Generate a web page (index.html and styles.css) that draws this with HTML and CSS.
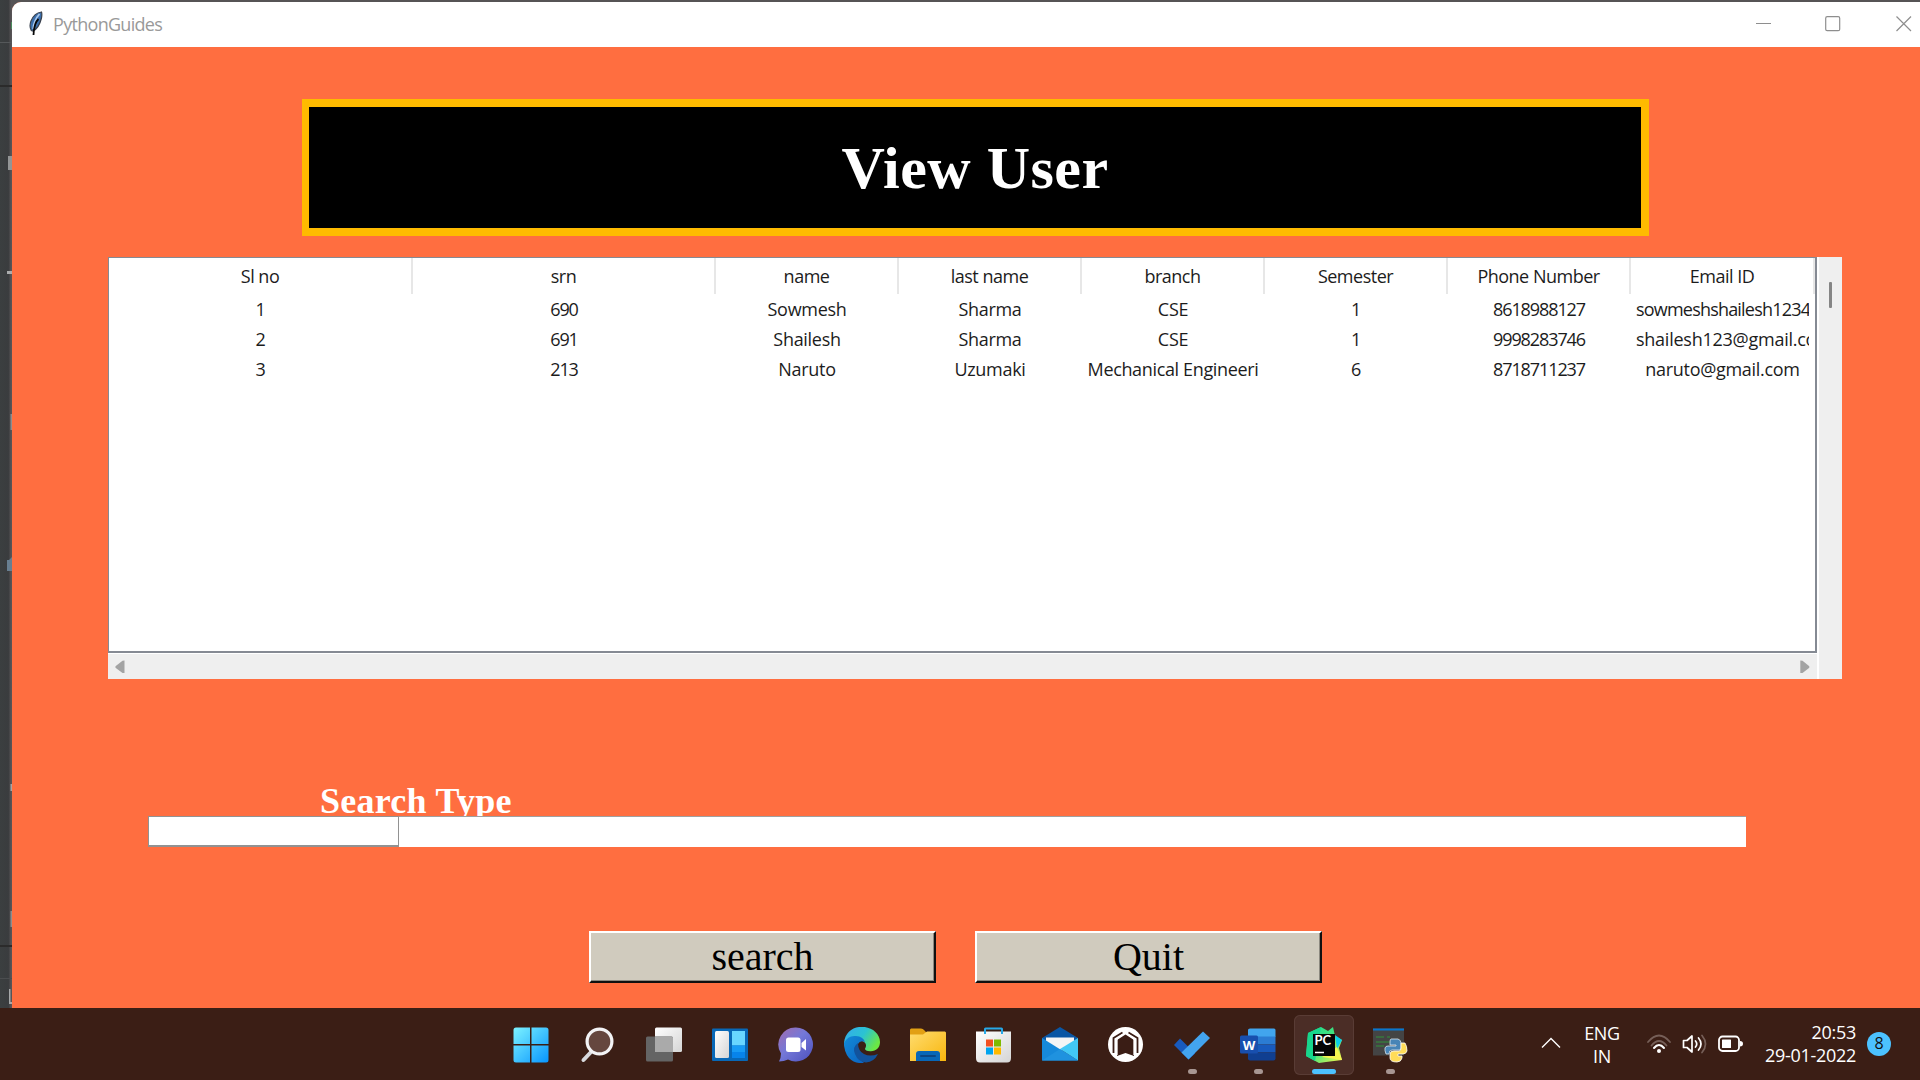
FILE: index.html
```html
<!DOCTYPE html>
<html lang="en">
<head>
<meta charset="utf-8">
<title>PythonGuides</title>
<link rel="stylesheet" href="styles.css">
</head>
<body>
<div class="desktop">
  <div class="workspace">
    <svg class="behind" width="12" height="1008" viewBox="0 0 12 1008">
      <defs><linearGradient id="shade" x1="0" x2="1"><stop offset="0" stop-color="#3b3f40"/><stop offset=".7" stop-color="#3a3c3e"/><stop offset=".86" stop-color="#504e50"/><stop offset="1" stop-color="#5a5658"/></linearGradient></defs>
      <rect width="12" height="1008" fill="url(#shade)"/>
      <path d="M0 42.500h12" stroke="#55585a"/><path d="M0 86h12M0 946h12" stroke="#2b2b2b" stroke-width="2"/><path d="M0 978.500h12" stroke="#4b4d4f"/>
      <rect x="11" y="22" width="1" height="7" fill="#4b8b5d"/>
      <rect x="8" y="156" width="4" height="14" fill="#939596"/>
      <path d="M7 271h5v3H7z" fill="#aaacad"/>
      <rect x="10.500" y="414" width="1.500" height="16" fill="#8c8e8f"/>
      <path d="M7 560h2l3-3v14H7z" fill="#687f91"/>
      <rect x="10.500" y="784" width="1.500" height="7" fill="#a5a5a5"/>
      <rect x="10.500" y="911" width="1.500" height="16" fill="#8c8e8f"/>
      <path d="M9 989h1.500v13H12v2H9z" fill="#a6a8a9"/>
    </svg>
    <main class="window">
      <header class="titlebar">
        <svg class="feather" width="14" height="25" viewBox="0 0 14 25">
          <path d="M12.500 2C8 2.500 4 6 2 11c-1.500 4-1.200 7 .3 9.500l1.800.5C8 19 11 14 12.500 8c.5-3 .5-4.500 0-6z" fill="#3c70ae" stroke="#39414d" stroke-width="1.200"/>
          <path d="M10.500 4C7 8 4.500 12 4.200 19" stroke="#a9c8ec" stroke-width="1.800" fill="none"/>
          <path d="M9.500 9C6 12 4.800 18 4.500 25" stroke="#080808" stroke-width="1.800" fill="none"/>
        </svg>
        <span class="caption">PythonGuides</span>
        <div class="controls">
          <svg width="16" height="16" viewBox="0 0 16 16"><path d="M0 8.500h15"/></svg>
          <svg width="16" height="16" viewBox="0 0 16 16"><rect x=".7" y="1.700" width="14" height="14" rx="1.500"/></svg>
          <svg class="close" width="16" height="16" viewBox="0 0 16 16"><path d="M.5 1.500L15 16M15 1.500L.5 16"/></svg>
        </div>
      </header>
      <section class="content">
        <h1 class="banner">View User</h1>
        <div class="tree">
          <div class="grid">
            <div class="row head"><span>Sl no</span><span>srn</span><span>name</span><span>last name</span><span>branch</span><span>Semester</span><span>Phone Number</span><span>Email ID</span></div>
            <div class="row"><span>1</span><span class="num">690</span><span>Sowmesh</span><span>Sharma</span><span>CSE</span><span>1</span><span class="num">8618988127</span><span class="long">sowmeshshailesh1234</span></div>
            <div class="row"><span>2</span><span class="num">691</span><span>Shailesh</span><span>Sharma</span><span>CSE</span><span>1</span><span class="num">9998283746</span><span class="mail">shailesh123@gmail.com</span></div>
            <div class="row"><span>3</span><span class="num">213</span><span>Naruto</span><span>Uzumaki</span><span class="branch">Mechanical Engineeri</span><span>6</span><span class="num">8718711237</span><span>naruto@gmail.com</span></div>
          </div>
          <div class="vscroll"><i class="thumb"></i></div>
          <div class="hscroll">
            <svg width="10" height="14" viewBox="0 0 10 14"><path d="M9.500.5v12.500L7.500 13 .8 8q-1-1 0-2L7.500.8z"/></svg>
            <svg width="10" height="14" viewBox="0 0 10 14"><path d="M.3.500v12.500L2.500 13 9 8q1-1 0-2L2.500.8z"/></svg>
          </div>
        </div>
        <div class="label">Search Type</div>
        <div class="fields"><div class="combo"></div></div>
        <div class="buttons"><button class="btn">search</button><button class="btn">Quit</button></div>
      </section>
    </main>
  </div>
  <footer class="taskbar">
    <svg width="0" height="0" class="defs"><defs>
      <linearGradient id="win" x1="0" y1="0" x2="1" y2="1"><stop stop-color="#7df3ff"/><stop offset="1" stop-color="#0795ff"/></linearGradient>
      <linearGradient id="wht" x1="0" y1="0" x2="1" y2="1"><stop stop-color="#fff"/><stop offset="1" stop-color="#d5d5d5"/></linearGradient>
      <linearGradient id="chat" x1="0" y1="0" x2="1" y2="1"><stop stop-color="#a36cae"/><stop offset=".45" stop-color="#7478d8"/><stop offset="1" stop-color="#4c50bd"/></linearGradient>
      <linearGradient id="edge" x1="0" y1="0" x2="1" y2=".5"><stop stop-color="#35a9ee"/><stop offset=".55" stop-color="#2bc3d2"/><stop offset="1" stop-color="#6be844"/></linearGradient>
      <linearGradient id="edge2" x1="0" y1="0" x2="1" y2="1"><stop stop-color="#128bd8"/><stop offset="1" stop-color="#0b62c0"/></linearGradient>
      <linearGradient id="fold" x1="0" y1="0" x2="1" y2="1"><stop stop-color="#ffdc6f"/><stop offset="1" stop-color="#f8b60d"/></linearGradient>
      <linearGradient id="pc" x1="0" y1="0" x2="1" y2="1"><stop stop-color="#20d991"/><stop offset=".5" stop-color="#43e47c"/><stop offset="1" stop-color="#fff84a"/></linearGradient>
    </defs></svg>
    <nav class="apps">
      <div class="app start"><svg viewBox="0 0 36 36"><path d="M3 .5h14v16.500H.5V3Q.5.500 3 .5zM18.500.5H33q2.500 0 2.500 2.500v14h-17zM.5 18.500H17v17H3Q.5 35.500.5 33zM18.500 18.500h17V33q0 2.500-2.500 2.500H18.500z" fill="url(#win)"/></svg></div>
      <div class="app"><svg viewBox="0 0 36 36"><path d="M12 24L3.500 33" stroke="#d8d9dc" stroke-width="4" stroke-linecap="round"/><circle cx="19.500" cy="14.500" r="12.400" fill="#65473f" stroke="#f3f3f5" stroke-width="3.200"/></svg></div>
      <div class="app"><svg viewBox="0 0 36 36"><rect x="9" y=".5" width="27" height="24.500" rx="1.500" fill="url(#wht)"/><rect y="9.500" width="27" height="25" rx="1.500" fill="#646464"/><path d="M9 9.500h16.500q1.500 0 1.500 1.500v14H9z" fill="#aaa"/></svg></div>
      <div class="app"><svg viewBox="0 0 36 36"><rect y="1.500" width="36" height="32.500" rx="1" fill="#0868b7"/><rect x="3" y="4" width="14" height="27" rx="1.500" fill="url(#wht)"/><rect x="20" y="4" width="13" height="14.500" fill="#68d6ff"/><rect x="20" y="18.500" width="13" height="6.500" fill="#179bf5"/><rect x="20" y="25" width="13" height="6" fill="#0784eb"/></svg></div>
      <div class="app"><svg viewBox="0 0 36 36"><path d="M18 .5a17 17 0 1 1-8 32q-4 2-9 2 2-4 2-8A17 17 0 0 1 18 .5z" fill="url(#chat)"/><rect x="8" y="10.500" width="14.500" height="14.500" rx="2.500" fill="#fff"/><path d="M23.500 16l4.500-4v11.500L23.500 20z" fill="#fff"/></svg></div>
      <div class="app"><svg viewBox="0 0 36 36">
        <path d="M0 16C1 5 9-.2 18-.2S36 6 36 15c0 6-4 9-9 9.300-4 .2-6-1-6-2.500 3-5-1-8-5-8-6 0-9 6-7 12C3 24 0 20 0 16z" fill="url(#edge)"/>
        <path d="M0 16q4-8 12-7 7 .5 9 6-5-2-7 2-4 6 1 14l5 5q-9 1-15-5Q0 25 0 16z" fill="url(#edge2)"/>
        <path d="M14 16q-6 4-3 11 3 8 11 8.500Q30 35 34 27q-8 3-14 0t-6-11z" fill="#12539d"/>
      </svg></div>
      <div class="app"><svg viewBox="0 0 36 36"><path d="M1 1.500h10q2 0 3 1.500l3 3v8H0V2.500z" fill="#e2a014"/><path d="M0 7.500h13l4-3h18l1 1v28.500H0z" fill="url(#fold)"/><path d="M6 34V27q0-3 3-3h18q3 0 3 3v7z" fill="#0867b7"/><path d="M11 29h14" stroke="#0b4683" stroke-width="2" stroke-linecap="round"/></svg></div>
      <div class="app"><svg viewBox="0 0 36 36"><path d="M0 4.500h35V31q0 4.500-4 4.500H4Q0 35.500 0 31z" fill="url(#wht)"/><path d="M9 7V2q0-.5.5-.5h16q.500 0 .5.500v5" fill="none" stroke="#27a9e8" stroke-width="2"/><path d="M10 12.500h7v7h-7z" fill="#f25022"/><path d="M18 12.500h7v7h-7z" fill="#7fba00"/><path d="M10 20.500h7v7h-7z" fill="#00a4ef"/><path d="M18 20.500h7v7h-7z" fill="#ffb900"/></svg></div>
      <div class="app"><svg viewBox="0 0 36 36"><path d="M0 11L18 0l18 11v4H0z" fill="#0a56a4"/><path d="M4 10.500h28v5L18 25 4 16z" fill="#f5f5f5"/><path d="M0 11l36 22.500H0z" fill="#1689da"/><path d="M36 11v22.500L18 22z" fill="#42c8f5"/><path d="M18 22l18 11.500H0z" fill="#1f92df"/></svg></div>
      <div class="app"><svg viewBox="0 0 36 36"><circle cx="17.500" cy="17.500" r="17.500" fill="#fff"/><path d="M14.500 5.500L5.500 11v15M20.500 5.500l9 5.500v15" fill="none" stroke="#3a1d15" stroke-width="1.800"/><path d="M17.500 7.500L26 13v16l-8.500-3-8.500 3V13z" fill="#3a1d15"/><path d="M15.500 7L9 11.500V28M19.500 7l6.500 4.500V28" fill="none" stroke="#fff" stroke-width="1.300"/></svg></div>
      <div class="app run"><svg viewBox="0 0 36 36"><path d="M0 18l6-6.500 15 15-6.500 6z" fill="#185abd"/><path d="M29 4.500l7 6.500-21.500 21.500-7-7z" fill="#43a4ef"/></svg></div>
      <div class="app run"><svg viewBox="0 0 36 36"><path d="M10 1.500h24q1.500 0 1.500 1.500v7H8V3q0-1.500 2-1.500z" fill="#41a5ee"/><path d="M8 9.500h27.500v8H8z" fill="#2b7cd3"/><path d="M8 17.500h27.500v8H8z" fill="#185abd"/><path d="M8 25.500h27.500v6q0 2-2 2H10q-2 0-2-2z" fill="#103f91"/><rect y="8.500" width="18" height="18" rx="1.500" fill="#184fae"/><text x="9" y="22.500" text-anchor="middle" class="word">W</text></svg></div>
      <div class="app run active"><svg viewBox="0 0 36 36"><path d="M2 6L15 0l7 4 5-4 2 9 7 4-3 8 3 12-16 2-7 1L0 29z" fill="url(#pc)"/><path d="M2 6L15 0 9 34 0 29z" fill="#17d68d"/><path d="M29 8l7 5-5 9z" fill="#0acfea"/><path d="M31 20l5 13-20-3z" fill="#f5f550"/><rect x="7" y="7" width="22" height="22" fill="#050505"/><path d="M9 25.500h9" stroke="#fff" stroke-width="1.500"/><text x="8.500" y="18" class="pc">PC</text></svg></div>
      <div class="app run"><svg viewBox="0 0 36 36"><rect x="1" y="1.500" width="31" height="27" fill="#444"/><path d="M1 2.500h31" stroke="#0876ce" stroke-width="2"/><path d="M4 10h8m3 0h3M4 15h15M4 19h8" stroke="#319238" stroke-width="1.200"/><path d="M19 12h7q3 1 3 4v5q0 2-2 2h-7q-3 0-3 4h-3q-3-8 2-8h8v-1h-6v-3q0-3 1-3z" fill="#4784b6" stroke="#dce6ee" stroke-width=".8"/><path d="M29 16h4q2 3 2 8-1 3-4 3h-5v2h4v2q-1 4-5 4-7 0-7-4v-4q0-3 4-3h5q2 0 2-3z" fill="#ffdc58" stroke="#fff" stroke-width=".8"/></svg></div>
    </nav>
    <div class="tray">
      <svg class="chev" width="20" height="12" viewBox="0 0 20 12"><path d="M1 10.500L10 1.500l9 9" fill="none" stroke="#fff" stroke-width="1.400"/></svg>
      <div class="lang">ENG<br>IN</div>
      <svg class="wifi" width="26" height="20" viewBox="0 0 26 20" fill="none" stroke-linecap="round" stroke-width="1.800"><path d="M2 8q11-13 22 0" stroke="#765f58"/><path d="M5.500 11.500q7.500-9 15 0" stroke="#765f58"/><path d="M8 14q5-6 10 0" stroke="#fff" stroke-width="2"/><circle cx="13" cy="17" r="2" fill="#fff"/></svg>
      <svg class="sound" width="26" height="20" viewBox="0 0 26 20" fill="none" stroke="#fff" stroke-width="1.700" stroke-linejoin="round" stroke-linecap="round"><path d="M1.500 6.500h3.500L10 2v16l-5-4.500H1.500zM13.500 7q2.500 3 0 6M16.500 4q5 6 0 12"/><path d="M20 1.500q7 8.500 0 17" stroke="#765f58"/></svg>
      <svg class="battery" width="26" height="18" viewBox="0 0 26 18"><rect x="1" y="1.500" width="20" height="14.500" rx="3.500" fill="none" stroke="#fff" stroke-width="1.800"/><rect x="4" y="4.500" width="9" height="8.500" rx=".6" fill="#fff"/><path d="M22 6q3 0 3 2.700T22 11.500z" fill="#fff"/></svg>
      <div class="clock">20:53<br>29-01-2022</div>
      <div class="badge">8</div>
    </div>
  </footer>
</div>
</body>
</html>
```
FILE: styles.css
```css
* { box-sizing: border-box; }
body { margin: 0; background: #3b3f40; overflow: hidden; }
.desktop { width: 1920px; height: 1080px; display: flex; flex-direction: column; }
.workspace { height: 1008px; display: flex; background: #565455; }
.behind { flex: none; }
.window { width: 1908px; margin-top: 2px; height: 1006px; display: flex; flex-direction: column; background: #ff6e40; border-top-left-radius: 9px; overflow: hidden; }
.titlebar { height: 45px; flex: none; background: #fff; display: flex; align-items: flex-start; font-family: "Open Sans", sans-serif; }
.feather { margin: 8px 0 0 17px; }
.caption { margin: 9px 0 0 10px; font-size: 18px; line-height: 27px; letter-spacing: -.7px; color: #999; }
.controls { margin: 13px 8px 0 auto; display: flex; gap: 53px; }
.controls svg { fill: none; stroke: #8e8e8e; stroke-width: 1.2; overflow: visible; }
.controls .close { margin-left: 2px; }

.content { height: 961px; display: flex; flex-direction: column; }
.banner { margin: 52px 0 0 290px; width: 1347px; height: 137px; border: 8px solid #ffbb00; border-left-width: 7px; background: #000; color: #fff; display: flex; align-items: center; justify-content: center; font: bold 60px/1 "Liberation Serif", serif; letter-spacing: .5px; }
.tree { margin: 21px 0 0 96px; width: 1734px; height: 422px; display: grid; grid-template: 396px 26px / 1709px 25px; background: #efefef; }
.grid { background: #fff; border: 1px solid #858a93; border-right-width: 2px; border-bottom-width: 2px; font: 18px/30px "Open Sans", sans-serif; letter-spacing: -.3px; color: #1c1c1c; }
.row { display: grid; grid-template-columns: 304px 303px 183px 183px 183px 183px 183px 184px; height: 30px; }
.row span { text-align: center; white-space: nowrap; overflow: hidden; margin: 0 6px 0 5px; }
.row .num { letter-spacing: -1.1px; }
.row .branch { letter-spacing: -.35px; }
.row .mail { text-align: left; letter-spacing: -.25px; }
.row .long { text-align: left; letter-spacing: -.8px; }
.head { height: 36px; line-height: 37px; letter-spacing: -.5px; }
.row.head span { margin: 0; border-right: 2px solid #e7e7e7; }
.vscroll { grid-row: 1 / 3; grid-column: 2; border-left: 2px solid #fff; background: #efefef; padding: 25px 0 0 10px; }
.thumb { display: block; width: 3px; height: 26px; border-radius: 1px; background: #858585; }
.hscroll { grid-row: 2; grid-column: 1; display: flex; justify-content: space-between; align-items: center; padding: 0 7px; border-top: 1px solid #fff; }
.hscroll svg { fill: #a3a3a3; }

.label { margin: 101px 0 0 308px; height: 36px; overflow: hidden; font: bold 36px/42px "Liberation Serif", serif; letter-spacing: .25px; color: #fff; white-space: nowrap; }
.fields { margin-left: 136px; width: 1598px; height: 31px; background: #fff; border-top: 1px solid #a0a0a0; }
.combo { margin-top: -1px; width: 251px; height: 31px; border: 1px solid #929292; border-bottom-width: 2px; }
.buttons { margin: 84px 0 0 577px; display: flex; gap: 39px; }
.btn { width: 347px; height: 52px; padding: 0 0 1px; border: 2px solid; border-color: #fff #101010 #101010 #fff; box-shadow: inset -1px -1px 0 #8b887f; background: #d0cbbe; color: #000; font: 40px/46px "Liberation Serif", serif; }

.taskbar { height: 72px; background: #3b1e15; display: flex; font-family: "Open Sans", sans-serif; color: #fff; }
.defs { flex: none; }
.apps { margin-left: 499px; width: 924px; display: grid; grid-template-columns: repeat(14, 66px); }
.app { margin: 7px 3px 5px; display: grid; grid-template-rows: 54px 5px; justify-items: center; border-radius: 6px; }
.app > svg { width: 36px; height: 36px; margin-top: 12px; }
.start { margin-left: 2px; margin-right: 4px; }
.active { background: #4b2d26; box-shadow: inset 0 0 0 1px #593c35; }
.run::after { content: ""; width: 9px; height: 5px; border-radius: 3px; background: #a79692; }
.active::after { width: 24px; background: #4cc2ff; }
.word { font: bold 13px "Open Sans", sans-serif; fill: #fff; }
.pc { font: bold 13px Lato, sans-serif; fill: #fff; }
.tray { margin-left: 118px; display: flex; align-items: flex-start; font-size: 18px; line-height: 23px; letter-spacing: -.3px; }
.chev { margin-top: 29px; }
.lang { width: 60px; margin: 14px 0 0 11px; text-align: center; }
.wifi { margin: 26px 0 0 14px; }
.sound { margin: 26px 0 0 10px; }
.battery { margin: 27px 0 0 10px; }
.clock { width: 112px; text-align: right; margin-top: 13px; }
.badge { width: 24px; height: 24px; margin: 24px 0 0 11px; border-radius: 50%; background: #4cc2ff; color: #111; text-align: center; font-size: 16px; line-height: 23px; letter-spacing: 0; }
```
